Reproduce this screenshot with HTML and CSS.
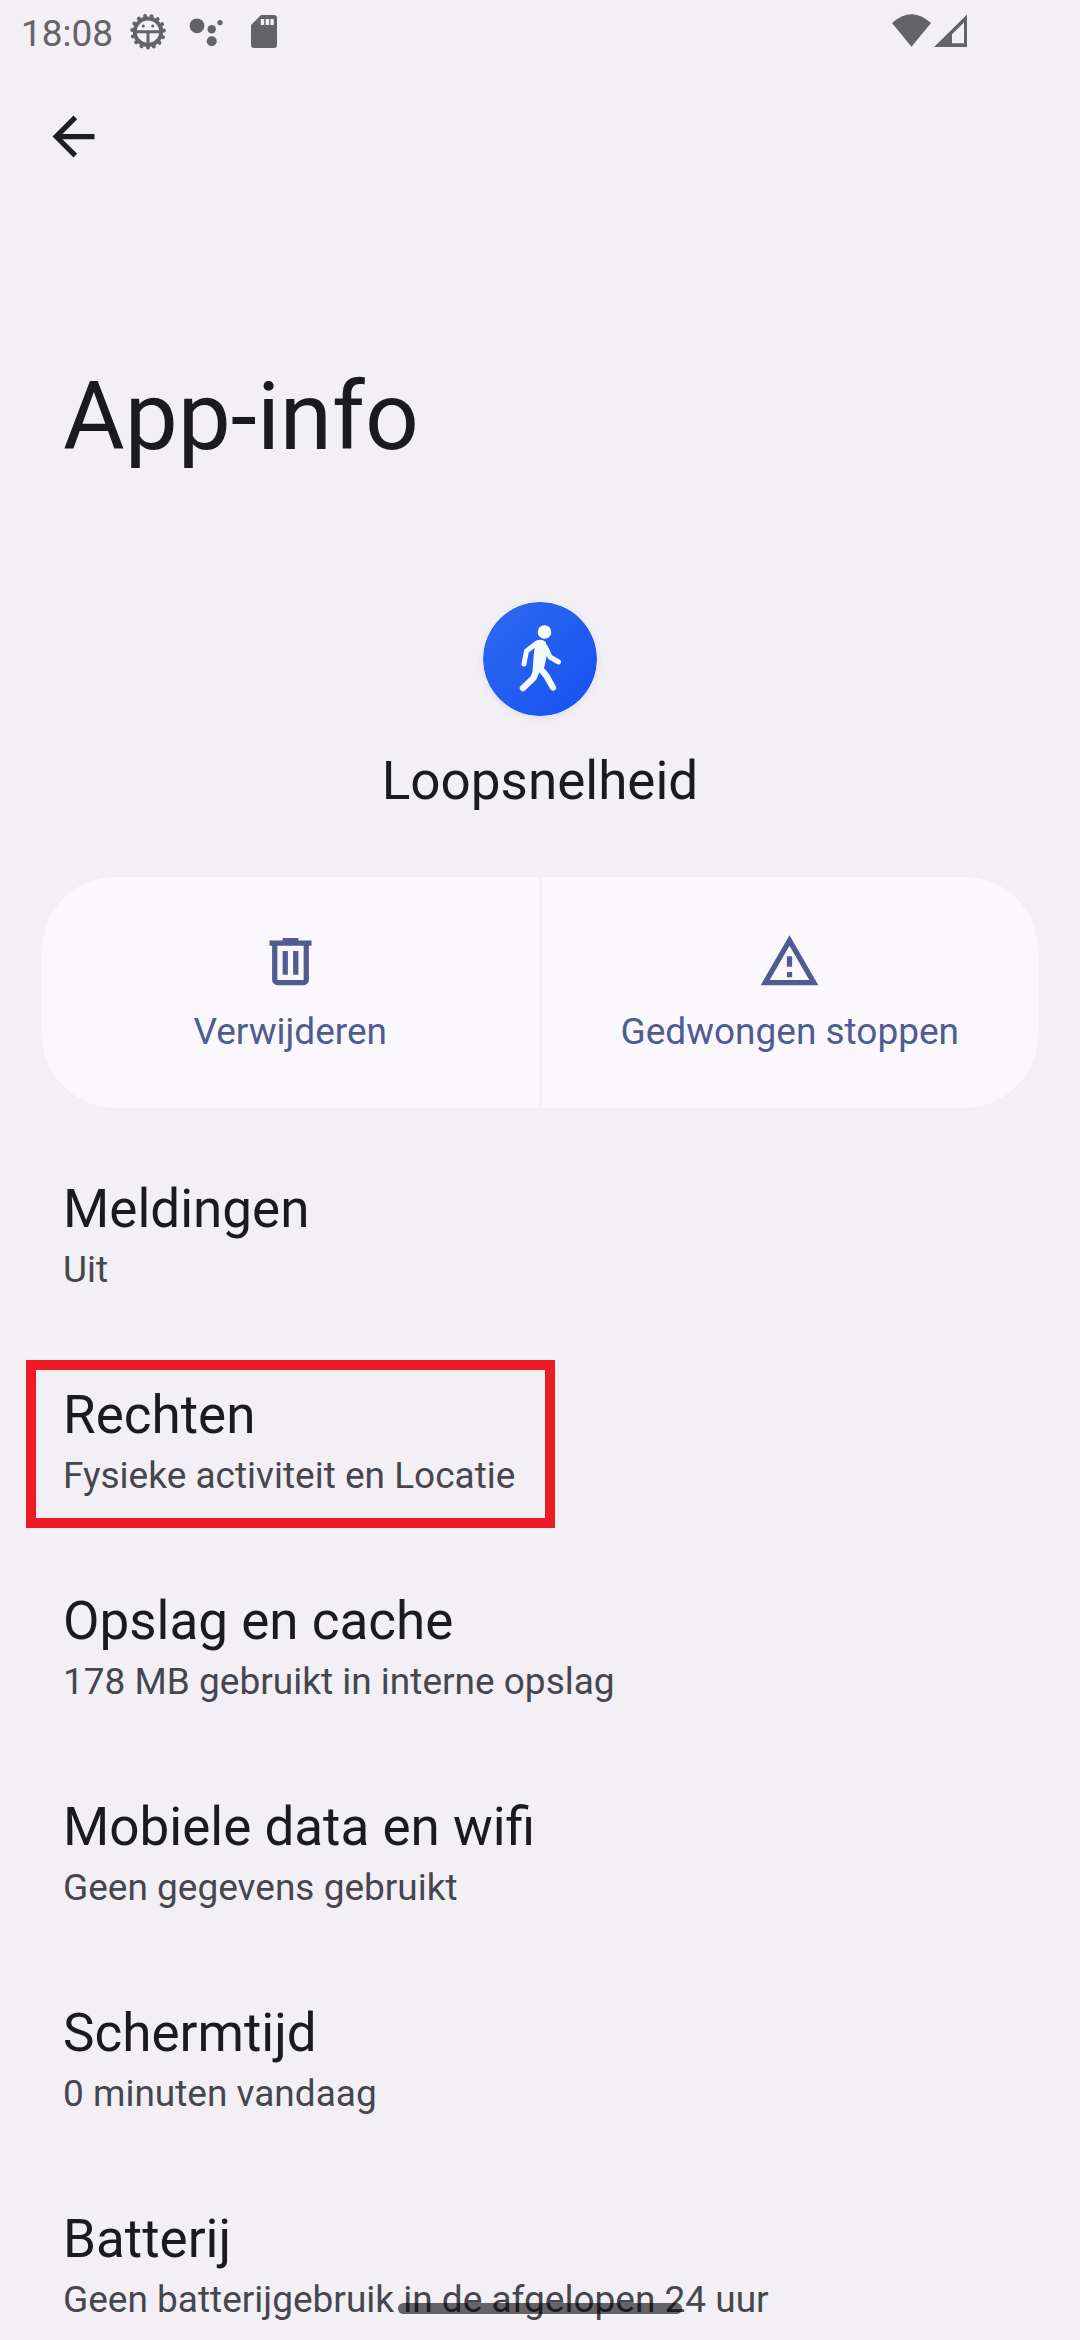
FILE: index.html
```html
<!DOCTYPE html>
<html lang="nl">
<head>
<meta charset="utf-8">
<title>App-info</title>
<link rel="stylesheet" href="styles.css">
</head>
<body>
<div class="screen">
  <header class="status-bar">
    <span class="clock">18:08</span>
    <svg class="status-left-icons" width="160" height="60" viewBox="120 0 160 60" fill="#646466">
      <g>
        <circle cx="148" cy="31.7" r="13.2" fill="none" stroke="#646466" stroke-width="4"/>
        <circle cx="148" cy="31.7" r="15.9" fill="none" stroke="#646466" stroke-width="4" stroke-linecap="round" stroke-dasharray="0.01 6.65" transform="rotate(90 148 31.7)"/>
        <path d="M136 30.200h24v3h-24zM146.500 32h3v13h-3z"/>
        <circle cx="143.3" cy="26" r="1.500"/>
        <circle cx="152.7" cy="26" r="1.500"/>
      </g>
      <circle cx="197" cy="25.8" r="7.400"/>
      <circle cx="211.7" cy="29.2" r="4.200"/>
      <circle cx="220" cy="22.6" r="2.700"/>
      <circle cx="211.7" cy="41.3" r="5"/>
      <path fill-rule="evenodd" d="M261 15h13a3 3 0 0 1 3 3v27a3 3 0 0 1-3 3h-20a3 3 0 0 1-3-3V25zM260.8 19v6h3.4v-6zM265.6 19v6h3.6v-6zM270.4 19v6h3.4v-6z"/>
    </svg>
    <svg class="status-right-icons" width="80" height="60" viewBox="890 0 80 60" fill="#646466">
      <path d="M892 23Q911.5 5.5 931 23L911.5 46.8z"/>
      <path fill-rule="evenodd" d="M967 14.5V47H934zM964 22.5L952 34.3V43.3h12z"/>
    </svg>
  </header>

  <nav class="toolbar">
    <svg class="icon" viewBox="0 0 24 24"><path d="M12 20L4 12L12 4L13.4 5.4L7.8 11H20V13H7.8L13.4 18.6z"/></svg>
  </nav>

  <h1 class="page-title">App-info</h1>

  <section class="app">
    <svg class="app-icon" width="114" height="114" viewBox="0 0 114 114">
      <defs>
        <linearGradient id="blue" x1="0" y1="0" x2="1" y2="1">
          <stop offset=".1" stop-color="#2b67f1"/>
          <stop offset=".85" stop-color="#1a55f0"/>
        </linearGradient>
      </defs>
      <circle cx="57" cy="57" r="57" fill="url(#blue)"/>
      <g stroke="#f5faff" fill="none" stroke-linecap="round" stroke-linejoin="round">
        <path stroke-width="5" d="M41 62L43.5 49L54 41M62.500 45L67 55L75.500 60"/>
        <path stroke-width="6.400" d="M55 65L50.500 76L40 86M56 65L63.500 74L70 85.500"/>
        <path fill="#f5faff" stroke-width="3" d="M54 40.500Q58 38 61.500 41L63 51L60 64L57 68L51 69L52.500 50z"/>
      </g>
      <circle cx="61.500" cy="30" r="6.800" fill="#fff"/>
    </svg>
    <h2 class="app-name">Loopsnelheid</h2>
  </section>

  <section class="actions">
    <div class="action action-start">
      <svg class="icon" viewBox="0 0 24 24"><path fill-rule="evenodd" d="M7 21Q6.175 21 5.588 20.413Q5 19.825 5 19V6H4V4H9V3H15V4H20V6H19V19Q19 19.825 18.413 20.413Q17.825 21 17 21zM17 6H7V19H17zM9 17H11V8H9zM13 17H15V8H13z"/></svg>
      <span>Verwijderen</span>
    </div>
    <div class="action action-end">
      <svg class="icon" viewBox="0 0 24 24"><path fill-rule="evenodd" d="M1 21L12 2L23 21zM4.450 19H19.550L12 6zM11 10H13V14H11zM11 16H13V18H11z"/></svg>
      <span>Gedwongen stoppen</span>
    </div>
  </section>

  <main class="preferences">
    <div class="preference"><div class="title">Meldingen</div><div class="summary">Uit</div></div>
    <div class="preference"><div class="title">Rechten</div><div class="summary">Fysieke activiteit en Locatie</div><div class="highlight"></div></div>
    <div class="preference"><div class="title">Opslag en cache</div><div class="summary">178 MB gebruikt in interne opslag</div></div>
    <div class="preference"><div class="title">Mobiele data en wifi</div><div class="summary">Geen gegevens gebruikt</div></div>
    <div class="preference"><div class="title">Schermtijd</div><div class="summary">0 minuten vandaag</div></div>
    <div class="preference"><div class="title">Batterij</div><div class="summary">Geen batterijgebruik in de afgelopen 24 uur</div></div>
  </main>
  <div class="gesture-bar"></div>
</div>
</body>
</html>
```
FILE: styles.css
```css
* { box-sizing: border-box; margin: 0; }
body { background: #f2f0f5; font-family: Roboto, sans-serif; color: #1b1b1f; }
.screen { position: relative; width: 1080px; height: 2340px; overflow: hidden; display: flex; flex-direction: column; }
.screen > * { flex-shrink: 0; }
.icon { display: block; width: 63px; height: 63px; fill: currentColor; }

.status-bar { height: 66px; padding-left: 21px; display: flex; align-items: flex-start; color: #646466; }
.clock { width: 99px; font-size: 37px; line-height: 44px; padding-top: 12px; }
.status-right-icons { margin-left: 610px; }

.toolbar { height: 147px; padding: 39px 42px 0; color: #1f1f1f; }

.page-title { margin-top: 148px; padding-left: 63px; font-size: 94.5px; line-height: 112px; font-weight: 400; }

.app { margin-top: 129px; display: flex; flex-direction: column; align-items: center; }
.app-icon { display: block; border-radius: 50%; box-shadow: 0 2px 6px rgba(80, 70, 60, .1); }
.app-name { margin-top: 34px; font-size: 53px; line-height: 62px; font-weight: 400; }

.actions { height: 231px; margin: 65px 42px 0; display: flex; gap: 3px; color: #505b92; }
.action { flex: 1; padding-top: 53px; display: flex; flex-direction: column; align-items: center; background: #faf8fd; font-size: 37px; line-height: 44px; }
.action span { margin-top: 17px; }
.action-start { border-radius: 73.5px 0 0 73.5px; }
.action-end { border-radius: 0 73.5px 73.5px 0; }

.preferences { margin-top: 28px; }
.preference { position: relative; height: 206px; padding: 42px 63px; }
.title { font-size: 53px; line-height: 62px; }
.summary { font-size: 37px; line-height: 44px; margin-top: 8px; color: #46464f; }
.highlight { position: absolute; left: 26px; top: 18px; width: 529px; height: 168px; border: 10px solid #ed1c24; }

.gesture-bar { position: absolute; left: 398px; top: 2303px; width: 284px; height: 11px; border-radius: 6px; background: rgba(0, 0, 0, .59); }
```
